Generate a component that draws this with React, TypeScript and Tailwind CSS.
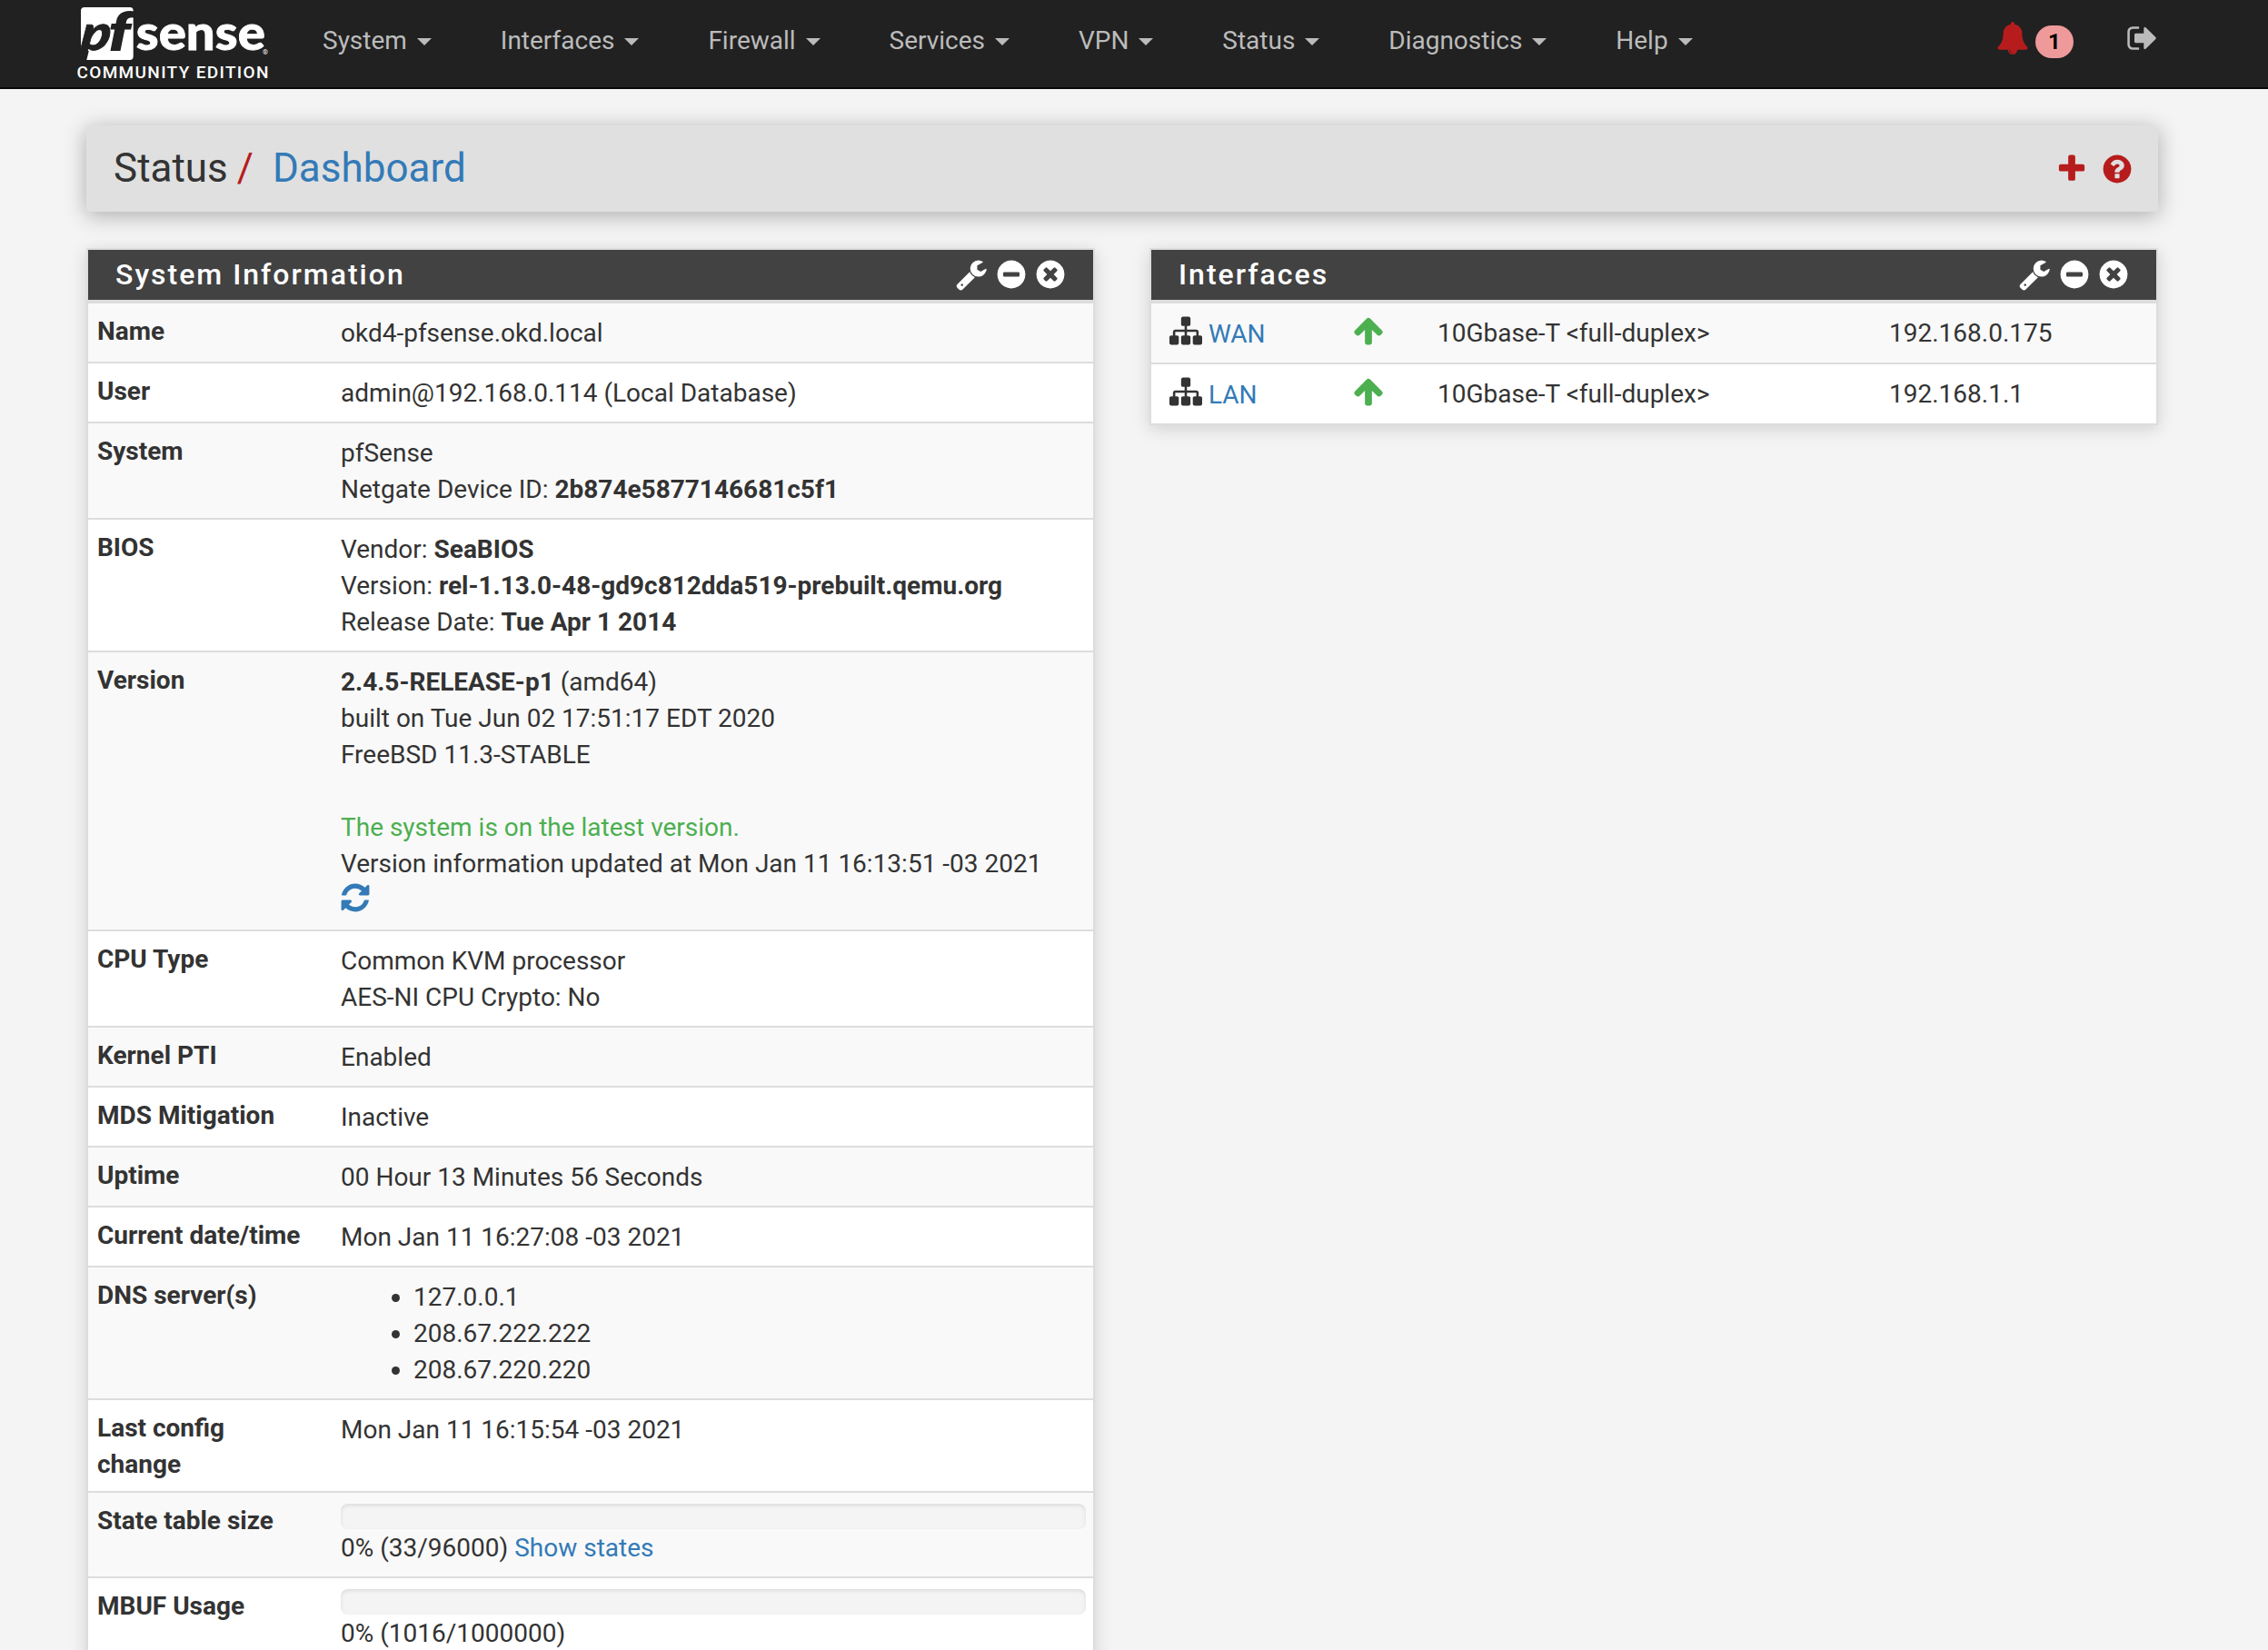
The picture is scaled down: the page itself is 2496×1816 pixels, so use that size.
import React from "react";

const paths = {
  plus: "M1600 736v192q0 40-28 68t-68 28h-416v416q0 40-28 68t-68 28h-192q-40 0-68-28t-28-68v-416h-416q-40 0-68-28t-28-68v-192q0-40 28-68t68-28h416v-416q0-40 28-68t68-28h192q40 0 68 28t28 68v416h416q40 0 68 28t28 68z",
  minus:
    "M1344 960v-128q0-26-19-45t-45-19h-768q-26 0-45 19t-19 45v128q0 26 19 45t45 19h768q26 0 45-19t19-45zm320-64q0 209-103 385.5t-279.5 279.5-385.5 103-385.5-103-279.5-279.5-103-385.5 103-385.5 279.5-279.5 385.5-103 385.5 103 279.5 279.5 103 385.5z",
  times:
    "M1277 1122q0-26-19-45l-181-181 181-181q19-19 19-45 0-27-19-46l-90-90q-19-19-46-19-26 0-45 19l-181 181-181-181q-19-19-45-19-27 0-46 19l-90 90q-19 19-19 46 0 26 19 45l181 181-181 181q-19 19-19 45 0 27 19 46l90 90q19 19 46 19 26 0 45-19l181-181 181 181q19 19 45 19 27 0 46-19l90-90q19-19 19-46zm387-226q0 209-103 385.5t-279.5 279.5-385.5 103-385.5-103-279.5-279.5-103-385.5 103-385.5 279.5-279.5 385.5-103 385.5 103 279.5 279.5 103 385.5z",
  question:
    "M1024 1376v-192q0-14-9-23t-23-9h-192q-14 0-23 9t-9 23v192q0 14 9 23t23 9h192q14 0 23-9t9-23zm256-672q0-88-55.5-163t-138.5-116-170-41q-243 0-371 213-15 24 8 42l132 100q7 6 19 6 16 0 25-12 53-68 86-92 34-24 86-24 48 0 85.5 26t37.5 59q0 38-20 61t-68 45q-63 28-115.5 86.5t-52.5 125.5v36q0 14 9 23t23 9h192q14 0 23-9t9-23q0-19 21.5-49.5t54.5-49.5q32-18 49-28.5t46-35 44.5-48 28-60.5 12.5-81zm384 192q0 209-103 385.5t-279.5 279.5-385.5 103-385.5-103-279.5-279.5-103-385.5 103-385.5 279.5-279.5 385.5-103 385.5 103 279.5 279.5 103 385.5z",
  wrench:
    "M448 1472q0-26-19-45t-45-19-45 19-19 45 19 45 45 19 45-19 19-45zm644-420l-682 682q-37 37-90 37-52 0-91-37l-106-108q-38-36-38-90 0-53 38-91l681-681q39 98 114.5 173.5t173.5 114.5zm634-435q0 39-23 106-47 134-164.5 217.5t-258.5 83.5q-185 0-316.5-131.5t-131.5-316.5 131.5-316.5 316.5-131.5q58 0 121.5 16.5t107.5 46.5q16 11 16 28t-16 28l-293 169v224l193 107q5-3 79-48.5t135.5-81 70.5-35.5q15 0 23.5 10t8.5 25z",
  sitemap:
    "M1792 1248v320q0 40-28 68t-68 28h-320q-40 0-68-28t-28-68v-320q0-40 28-68t68-28h96v-192h-512v192h96q40 0 68 28t28 68v320q0 40-28 68t-68 28h-320q-40 0-68-28t-28-68v-320q0-40 28-68t68-28h96v-192h-512v192h96q40 0 68 28t28 68v320q0 40-28 68t-68 28h-320q-40 0-68-28t-28-68v-320q0-40 28-68t68-28h96v-192q0-52 38-90t90-38h512v-192h-96q-40 0-68-28t-28-68v-320q0-40 28-68t68-28h320q40 0 68 28t28 68v320q0 40-28 68t-68 28h-96v192h512q52 0 90 38t38 90v192h96q40 0 68 28t28 68z",
  arrowUp:
    "M1675 971q0 51-37 90l-75 75q-38 38-91 38-54 0-90-38l-294-293v704q0 52-37.5 84.5t-90.5 32.5h-128q-53 0-90.5-32.5t-37.5-84.5v-704l-294 293q-36 38-90 38t-90-38l-75-75q-38-38-38-90 0-53 38-91l651-651q35-37 90-37 54 0 91 37l651 651q37 39 37 91z",
  refresh:
    "M1639 1056q0 5-1 7-64 268-268 434.5t-478 166.5q-146 0-282.5-55t-243.5-157l-129 129q-19 19-45 19t-45-19-19-45v-448q0-26 19-45t45-19h448q26 0 45 19t19 45-19 45l-137 137q71 66 161 102t187 36q134 0 250-65t186-179q11-17 53-117 8-23 30-23h192q13 0 22.5 9.5t9.5 22.5zm25-800v448q0 26-19 45t-45 19h-448q-26 0-45-19t-19-45 19-45l138-138q-148-137-349-137-134 0-250 65t-186 179q-11 17-53 117-8 23-30 23h-199q-13 0-22.5-9.5t-9.5-22.5v-7q65-268 270-434.5t480-166.5q146 0 284 55.5t245 156.5l130-129q19-19 45-19t45 19 19 45z",
  signOut:
    "M704 1440q0 4 1 20t.5 26.5-3 23.5-10 19.5-20.5 6.5h-320q-119 0-203.5-84.5t-84.5-203.5v-704q0-119 84.5-203.5t203.5-84.5h320q13 0 22.5 9.5t9.5 22.5q0 4 1 20t.5 26.5-3 23.5-10 19.5-20.5 6.5h-320q-66 0-113 47t-47 113v704q0 66 47 113t113 47h312l11.5 1 11.5 3 8 5.5 7 9 2 13.5zm928-544q0 26-19 45l-544 544q-19 19-45 19t-45-19-19-45v-288h-448q-26 0-45-19t-19-45v-384q0-26 19-45t45-19h448v-288q0-26 19-45t45-19 45 19l544 544q19 19 19 45z",
  bell: "M912 1696q0-16-16-16-59 0-101.5-42.5t-42.5-101.5q0-16-16-16t-16 16q0 73 51.5 124.5t124.5 51.5q16 0 16-16zm816-288q0 52-38 90t-90 38h-448q0 106-75 181t-181 75-181-75-75-181h-448q-52 0-90-38t-38-90q50-42 91-88t85-119.5 74.5-158.5 50-206 19.5-260q0-152 117-282.5t307-158.5q-8-19-8-39 0-40 28-68t68-28 68 28 28 68q0 20-8 39 190 28 307 158.5t117 282.5q0 139 19.5 260t50 206 74.5 158.5 85 119.5 91 88z",
};

function Icon({ name, className = "" }: { name: keyof typeof paths; className?: string }) {
  return (
    <svg viewBox="0 0 1792 1792" className={`size-9 shrink-0 fill-current ${className}`} aria-hidden="true">
      <path d={paths[name]} />
    </svg>
  );
}

function Logo() {
  return (
    <svg viewBox="78 0 230 96" className="h-24 w-[230px] shrink-0">
      <path d="M93 8H143Q146.700 8 146.700 12V62Q146.700 66 142.700 66H95.300L97.800 56H89V12Q89 8 93 8Z" fill="#fff" />
      <g transform="translate(-2.500 0) translate(0 55.500) skewX(-7) translate(0 -55.500)">
        <text x="90" y="55.500" fontFamily="Lato" fontWeight="900" fontStyle="italic" fontSize="54" fill="#212121" stroke="#212121" strokeWidth="0.8" textLength="33" lengthAdjust="spacingAndGlyphs">
          p
        </text>
      </g>
      <text x="119.500" y="55.500" fontFamily="Roboto" fontWeight="900" fontStyle="italic" fontSize="57" fill="#212121" textLength="24" lengthAdjust="spacingAndGlyphs">
        f
      </text>
      <text x="149.800" y="55.300" fontFamily="Lato" fontWeight="900" fontSize="54" fill="#fff" stroke="#fff" strokeWidth="0.8" textLength="142" lengthAdjust="spacingAndGlyphs">
        sense
      </text>
      <text x="289" y="59.500" fontFamily="Roboto" fontSize="7.500" fill="#fff">
        ®
      </text>
      <text x="84.500" y="86" fontFamily="Roboto" fontWeight="500" fontSize="19" fill="#fff" textLength="211" lengthAdjust="spacing">
        COMMUNITY EDITION
      </text>
    </svg>
  );
}

const menu = ["System", "Interfaces", "Firewall", "Services", "VPN", "Status", "Diagnostics", "Help"];

function Navbar() {
  return (
    <header className="flex h-[98px] border-b-2 border-[#080808] bg-[#212121] pl-[78px] pr-[120px] text-[#bbbbbb]">
      <Logo />
      <nav className="ml-[47px] flex gap-[75.9px] pt-6">
        {menu.map((m) => (
          <a key={m} className="flex h-10 items-center gap-[11px]">
            <span className="pt-[2px]">{m}</span>
            <span className="mt-1 border-x-8 border-t-8 border-x-transparent border-t-[#bbbbbb]" />
          </a>
        ))}
      </nav>
      <div className="ml-auto flex items-start pt-6">
        <Icon name="bell" className="text-[#b71c1c]" />
        <span className="ml-[7px] mt-1 flex h-9 w-[42px] items-center justify-center rounded-[20px] bg-[#ef9a9a] text-[24px] font-bold text-black">
          1
        </span>
        <Icon name="signOut" className="ml-[58px]" />
      </div>
    </header>
  );
}

function Panel({ title, children }: { title: string; children: React.ReactNode }) {
  return (
    <section className="w-[1110px] border-2 border-[#dddddd] bg-white shadow-[0_4px_18px_rgba(0,0,0,0.15)]">
      <div className="flex h-[55px] items-start bg-[#424242] pl-[30px] pr-[29px] text-white">
        <h2 className="mt-[6px] grow text-[32px] font-medium leading-[42px] tracking-[2px]">{title}</h2>
        <div className="mt-[9px] flex gap-[7px]">
          <Icon name="wrench" className="-ml-px mr-px" />
          <Icon name="minus" />
          <Icon name="times" />
        </div>
      </div>
      <div className="border-t-4 border-[#dddddd]">{children}</div>
    </section>
  );
}

function Bar() {
  return <div className="-mt-px mb-px h-7 rounded-lg bg-[#f4f4f4] shadow-[inset_0_2px_4px_rgba(0,0,0,0.1)]" />;
}

const rows: { label: React.ReactNode; value: React.ReactNode; tall?: boolean }[] = [
  { label: "Name", value: "okd4-pfsense.okd.local" },
  { label: "User", value: "admin@192.168.0.114 (Local Database)" },
  {
    label: "System",
    value: (
      <>
        pfSense
        <br />
        Netgate Device ID: <b>2b874e5877146681c5f1</b>
      </>
    ),
  },
  {
    label: "BIOS",
    value: (
      <>
        Vendor: <b>SeaBIOS</b>
        <br />
        Version: <b>rel-1.13.0-48-gd9c812dda519-prebuilt.qemu.org</b>
        <br />
        Release Date: <b>Tue Apr 1 2014</b>
      </>
    ),
  },
  {
    label: "Version",
    tall: true,
    value: (
      <>
        <b>2.4.5-RELEASE-p1</b> (amd64)
        <br />
        built on Tue Jun 02 17:51:17 EDT 2020
        <br />
        FreeBSD 11.3-STABLE
        <br />
        <br />
        <span className="text-[#4caf50]">The system is on the latest version.</span>
        <br />
        Version information updated at Mon Jan 11 16:13:51 -03 2021
        <Icon name="refresh" className="-ml-[2px] -mt-px text-[#337ab7]" />
      </>
    ),
  },
  {
    label: "CPU Type",
    value: (
      <>
        Common KVM processor
        <br />
        AES-NI CPU Crypto: No
      </>
    ),
  },
  { label: "Kernel PTI", value: "Enabled" },
  { label: "MDS Mitigation", value: "Inactive" },
  { label: "Uptime", value: "00 Hour 13 Minutes 56 Seconds" },
  { label: "Current date/time", value: "Mon Jan 11 16:27:08 -03 2021" },
  {
    label: "DNS server(s)",
    value: (
      <ul className="list-disc pl-20">
        <li>127.0.0.1</li>
        <li>208.67.222.222</li>
        <li>208.67.220.220</li>
      </ul>
    ),
  },
  {
    label: (
      <>
        Last config
        <br />
        change
      </>
    ),
    value: "Mon Jan 11 16:15:54 -03 2021",
  },
  {
    label: "State table size",
    value: (
      <>
        <Bar />
        0% (33/96000) <a className="text-[#337ab7]">Show states</a>
      </>
    ),
  },
  {
    label: "MBUF Usage",
    value: (
      <>
        <Bar />
        0% (1016/1000000)
      </>
    ),
  },
];

function SystemInformation() {
  return (
    <Panel title="System Information">
      {rows.map((r, i) => (
        <div
          key={i}
          className={`flex border-b-2 border-[#dddddd] ${i % 2 === 0 ? "bg-[#f9f9f9]" : "bg-white"} ${r.tall ? "h-[307px]" : ""}`}
        >
          <div className="w-[270px] shrink-0 pt-[11px] pb-[9px] pl-[10px] font-bold">{r.label}</div>
          <div className="min-w-0 grow px-2 pt-[13px] pb-[11px]">{r.value}</div>
        </div>
      ))}
    </Panel>
  );
}

const interfaces = [
  { name: "WAN", ip: "192.168.0.175" },
  { name: "LAN", ip: "192.168.1.1" },
];

function Interfaces() {
  return (
    <Panel title="Interfaces">
      {interfaces.map((n, i) => (
        <div
          key={n.name}
          className={`flex pt-3 pl-5 ${i === 0 ? "h-[67px] border-b-2 border-[#dddddd] bg-[#f9f9f9]" : "h-[65px] bg-white"}`}
        >
          <div className="flex w-[201px]">
            <Icon name="sitemap" />
            <a className="ml-[7px] mt-[2px] text-[#337ab7]">{n.name}</a>
          </div>
          <Icon name="arrowUp" className="text-[#4caf50]" />
          <div className="ml-[58px] mt-px w-[497px]">10Gbase-T &lt;full-duplex&gt;</div>
          <div className="mt-px">{n.ip}</div>
        </div>
      ))}
    </Panel>
  );
}

export default function App() {
  return (
    <div className="h-[1816px] w-[2496px] overflow-hidden bg-[#f4f4f4] font-['Roboto',sans-serif] text-[28px] leading-10 text-[#333333]">
      <Navbar />
      <main className="pt-10 pl-[95px] pr-[121px]">
        <div className="flex h-[95px] rounded-[4px] bg-[#e0e0e0] pl-[30px] pr-[27px] shadow-[0_4px_24px_rgba(0,0,0,0.3)]">
          <h1 className="mt-[21px] grow text-[44px] leading-[52px]">
            Status<span className="ml-[10px] text-[#b71c1c]">/</span>
            <a className="ml-[21px] text-[#337ab7]">Dashboard</a>
          </h1>
          <div className="mt-[30px] flex gap-[14px] text-[#b71c1c]">
            <Icon name="plus" />
            <Icon name="question" />
          </div>
        </div>
        <div className="mt-10 flex items-start gap-[60px]">
          <SystemInformation />
          <Interfaces />
        </div>
      </main>
    </div>
  );
}
